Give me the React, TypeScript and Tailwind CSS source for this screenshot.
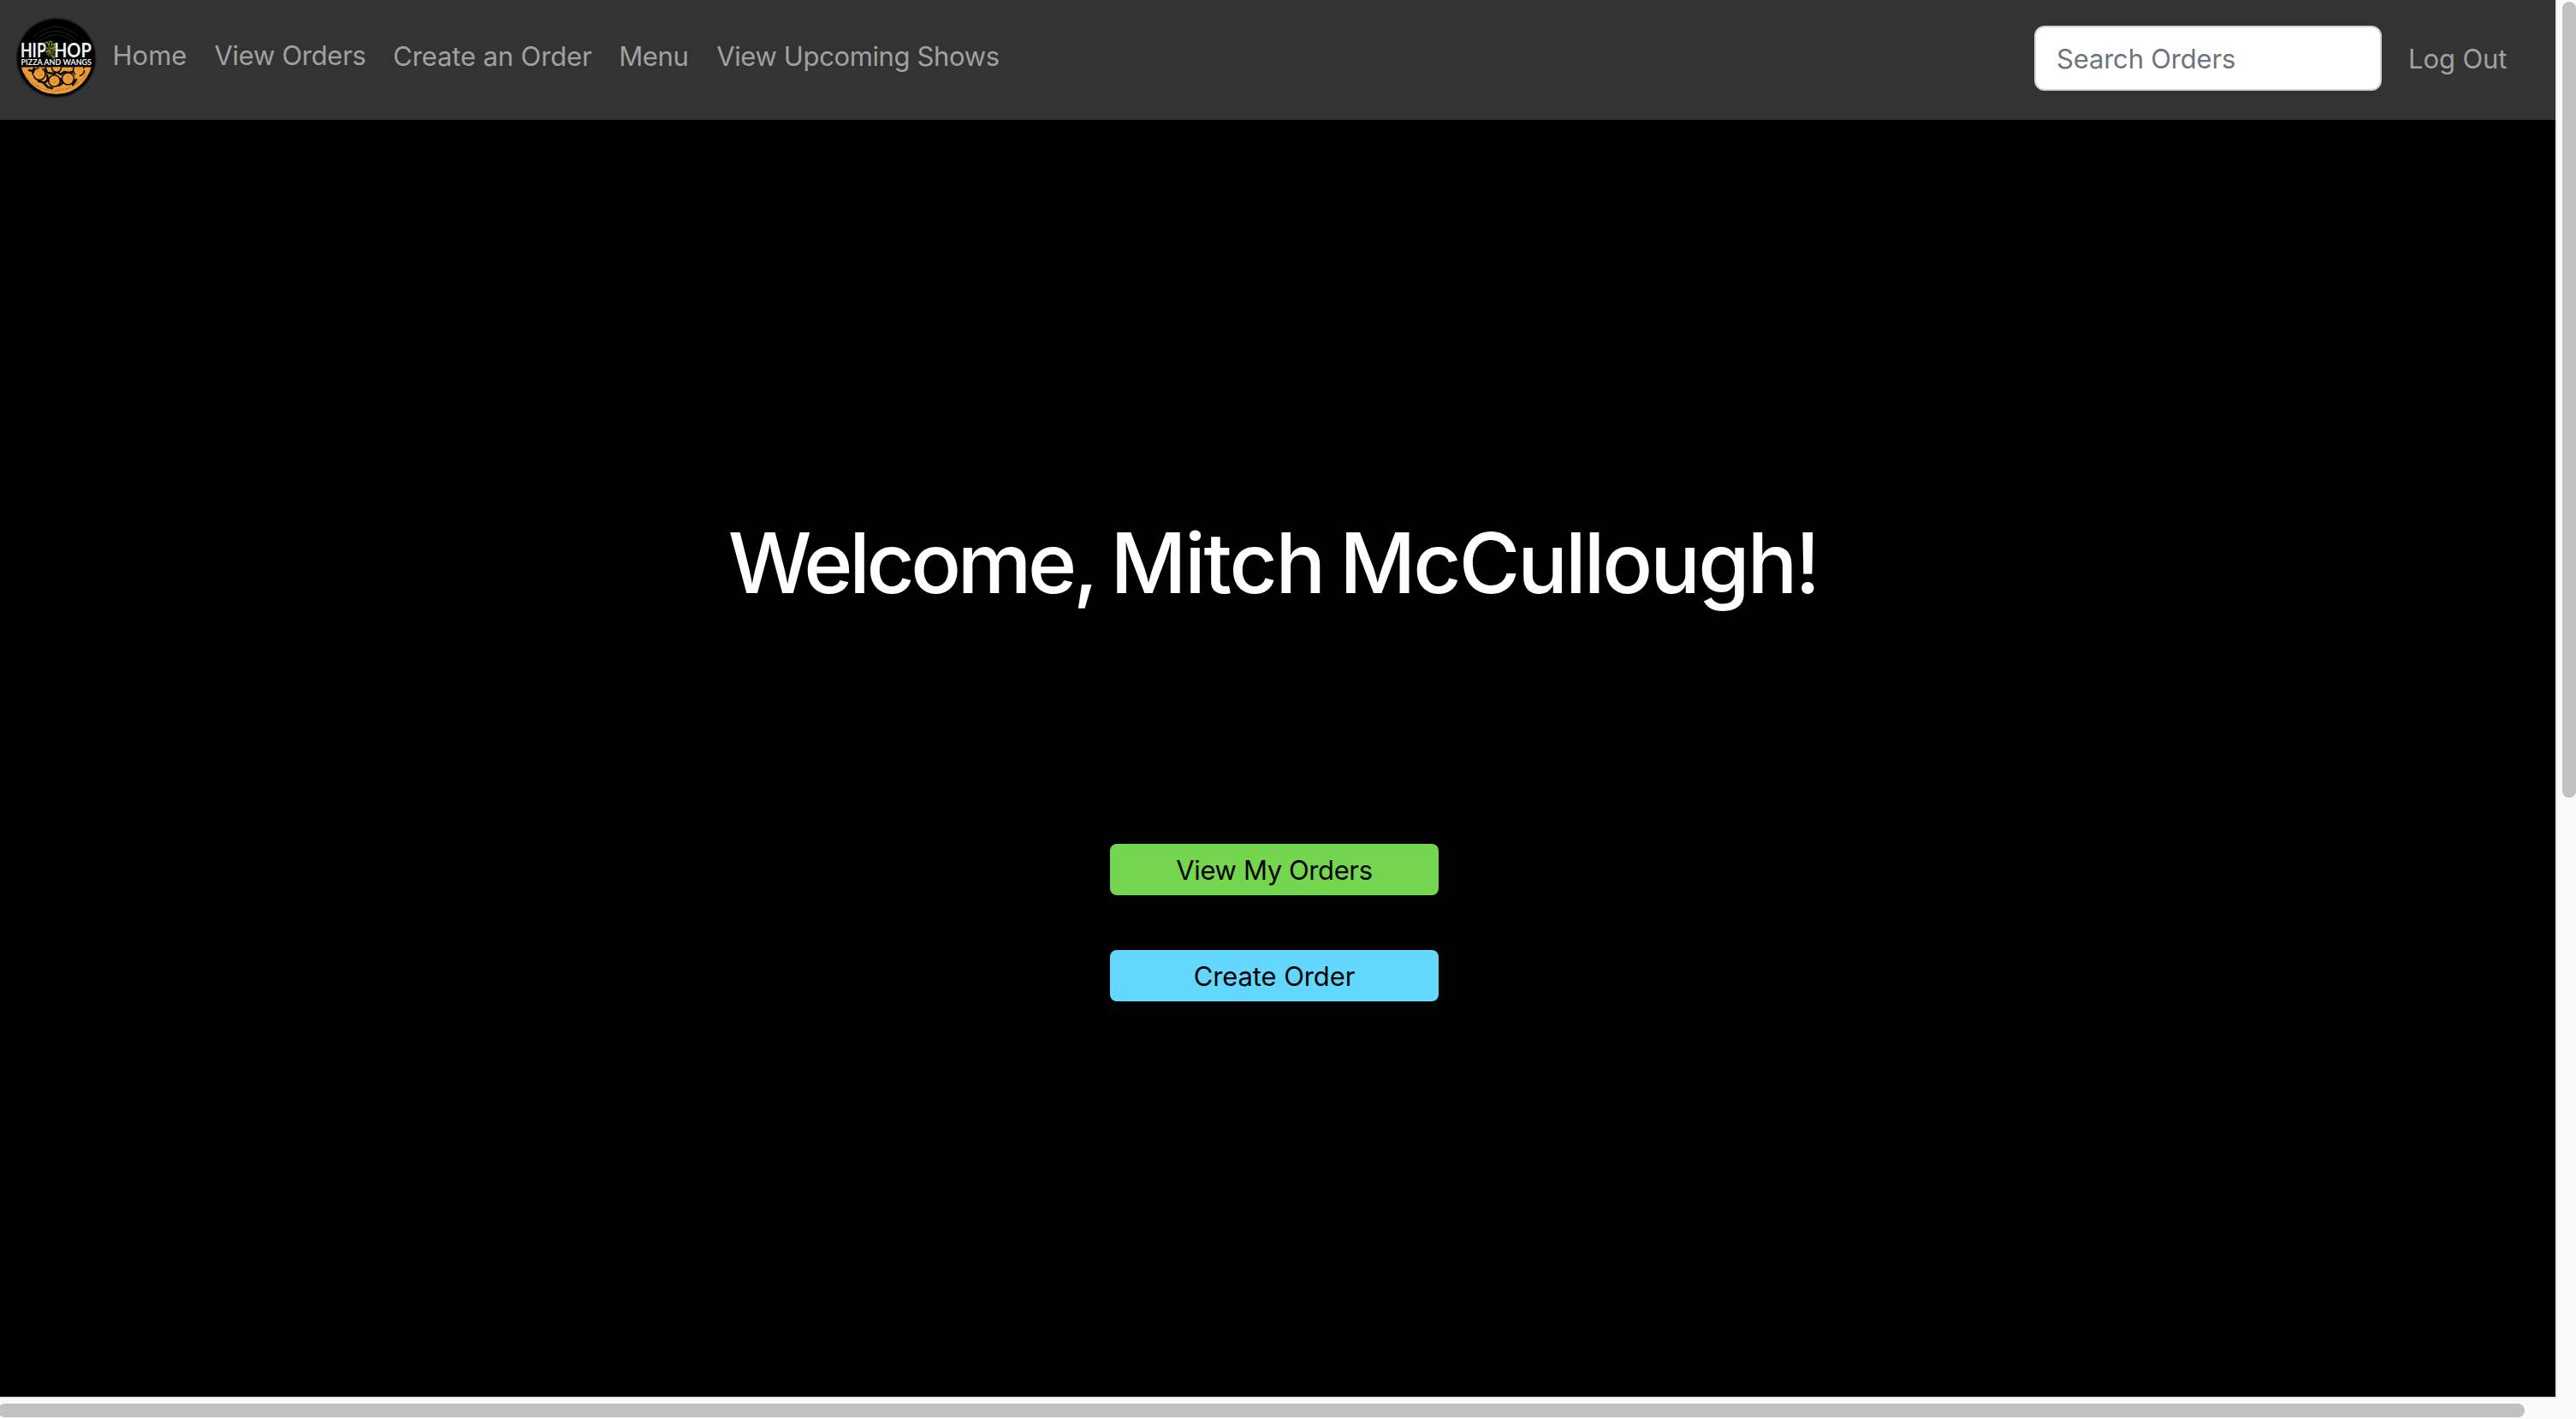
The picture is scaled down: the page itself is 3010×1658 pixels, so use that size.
function Logo() {
  return (
    <svg viewBox="0 0 96 96" className="block h-24 w-24">
      <defs>
        <radialGradient id="vinyl-edge">
          <stop offset="0.93" stopColor="#000" />
          <stop offset="1" stopColor="#000" stopOpacity="0" />
        </radialGradient>
        <clipPath id="pizza-half">
          <rect x="0" y="58.5" width="96" height="40" />
        </clipPath>
        <clipPath id="vinyl-top">
          <rect x="0" y="0" width="96" height="28" />
        </clipPath>
      </defs>
      {/* record */}
      <circle cx="47.6" cy="47.6" r="47.6" fill="url(#vinyl-edge)" />
      <g fill="none" stroke="#202020" strokeWidth="1" clipPath="url(#vinyl-top)">
        <path d="M21 23Q47 0 73 22" />
        <path d="M24 26Q48 6 71 27" />
        <path d="M28 28Q48 13 67 28" />
      </g>
      {/* pizza */}
      <g clipPath="url(#pizza-half)">
        <circle cx="47.8" cy="47.9" r="42.2" fill="#eb9b35" />
        <path d="M11 66Q21 84 44 86Q70 86 83 66" fill="none" stroke="#a3651f" strokeWidth="0.8" strokeDasharray="3 1.5 6 2" />
        <g fill="none" stroke="#0b0905" strokeWidth="2.6" strokeLinejoin="round" strokeLinecap="round">
          <path d="M16 62l4 1 1 4M22 60l-2 3" />
          <path d="M35 60l2 5 8 1 4-2 4 3 4-3 5 1 5-1M27 75l5 1 6 6 5 1M34 77l4-4-1-5M67 79l4-6M51 80l4-3-2-5" />
        </g>
        <g fill="#eb9b35" stroke="#0b0905" strokeWidth="1.6">
          <circle cx="28" cy="66.5" r="7" strokeDasharray="20 3 9 4" />
          <circle cx="45.5" cy="74.5" r="6.8" />
          <circle cx="61.5" cy="72" r="7" />
          <circle cx="48" cy="59" r="5.5" />
          <circle cx="74" cy="62" r="6.5" strokeDasharray="9 5 12 3" />
        </g>
        <g fill="none" stroke="#bd7624" strokeWidth="0.7">
          <path d="M25 64l4-2M27 69l4-2M43 73l4-1M44 77l4-2M60 70l3-1M61 74l3-2M72 62l4-2M75 74l-5 6M49 84l8-1M24 79l6 4" />
        </g>
      </g>
      {/* lettering */}
      <g fill="#f2f2f2" className="font-['Lato',sans-serif]">
        <text x="5.9" y="46.9" fontSize="23.4" fontWeight="700" textLength="30" lengthAdjust="spacingAndGlyphs">
          HIP
        </text>
        <text x="44.9" y="46.9" fontSize="23.4" fontWeight="700" textLength="44" lengthAdjust="spacingAndGlyphs">
          HOP
        </text>
        <text x="6.5" y="56" fontSize="9.1" fontWeight="700" textLength="82.5" lengthAdjust="spacingAndGlyphs">
          PIZZA AND WANGS
        </text>
      </g>
      {/* leaf */}
      <path d="M35 37l4-4 6 2 2 5-2 7-6-1-4-5z" fill="#2c3a17" />
      <g fill="none" strokeWidth="1.1">
        <path d="M33 31l4-2 2 4 1-5 3 1-1 4 4-2-1 4 3 2M34 35l4 2M36 41l3-2 2 4M40 37l4-1 2 3M42 45l4 2-3 1" stroke="#7faa32" />
        <path d="M37 36l5 5M39 33l2 5M37 44l4-2M44 38l-2 5" stroke="#8b4a2b" />
      </g>
    </svg>
  );
}

export default function App() {
  return (
    <div className="flex h-[1658px] w-[3010px] flex-col overflow-hidden bg-[#fafafa] font-['Inter',sans-serif] text-[31px] leading-[48px]">
      <div className="flex h-[1634px]">
        <div className="flex h-full w-[2988px] shrink-0 flex-col border-r-2 border-b-2 border-[#e8e8e8] bg-black">
          <header className="flex h-[140px] shrink-0 bg-[#333333] text-[#a1a1a1]">
            <div className="ml-[18px] mt-[20px] h-24 w-24">
              <Logo />
            </div>
            <nav className="ml-[17.5px] mt-[40.5px] flex whitespace-nowrap">
              <a className="w-[119px]">Home</a>
              <a className="w-[208.7px] tracking-[-0.308px]">View Orders</a>
              <a className="mt-px w-[264px] tracking-[-0.126px]">Create an Order</a>
              <a className="mt-px w-[114px] tracking-[-0.364px]">Menu</a>
              <a className="mt-px tracking-[-0.371px]">View Upcoming Shows</a>
            </nav>
            <div className="ml-auto mt-[30px] flex h-[76px] w-[406px] items-center rounded-xl border-2 border-[#ced4da] bg-white pl-[24px] tracking-[-0.181px] text-[#6c757d]">
              <span className="pt-px">Search Orders</span>
            </div>
            <a className="ml-[31px] mr-[53px] mt-[45px] w-[119px] whitespace-nowrap tracking-[-0.097px]">Log Out</a>
          </header>
          <main className="flex flex-col items-center pr-[8px]">
            <h1 className="mt-[458px] h-[120px] whitespace-nowrap text-[97.5px] font-medium leading-[120px] tracking-[-7.6px] text-white">
              <span className="tracking-[-4.37px]">Welcome,</span> <span className="tracking-[-2.3px]">Mitch</span>{' '}
              <span className="mr-[3px] tracking-[-2.89px]">McCullough!</span>
            </h1>
            <button className="mt-[268px] h-[60px] w-[384px] rounded-lg bg-[#74d64f] pt-px tracking-[-0.391px] text-black">View My Orders</button>
            <button className="mt-[64px] h-[60px] w-[384px] rounded-lg bg-[#64d7ff] pt-px tracking-[-0.103px] text-black">Create Order</button>
          </main>
        </div>
        <div className="ml-[6px] mt-[2px] h-[930px] w-4 rounded-full bg-[#c1c1c1]" />
      </div>
      <div className="-ml-[2px] mt-[6px] h-4 w-[2952px] shrink-0 rounded-full bg-[#c1c1c1]" />
    </div>
  );
}
